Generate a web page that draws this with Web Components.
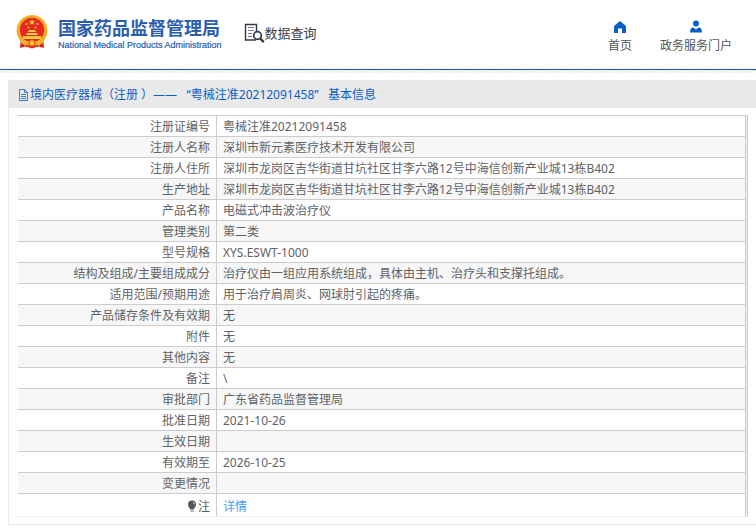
<!DOCTYPE html>
<html lang="zh-CN">
<head>
<meta charset="utf-8">
<title>国家药品监督管理局 数据查询</title>
<style>
body { margin: 0; background: #fff; color: #606266; font: 12px/20px "Noto Sans", "Noto Sans CJK SC", sans-serif; }
</style>
</head>
<body>
<site-header>
  <nav-link slot="nav" icon="home">首页</nav-link>
  <nav-link slot="nav" icon="user">政务服务门户</nav-link>
</site-header>
<info-panel>
  <span slot="title">境内医疗器械（注册 ）—— &nbsp;&nbsp;“粤械注准20212091458” &nbsp;&nbsp;基本信息</span>
  <record-table></record-table>
</info-panel>

<template id="site-header">
<style>
:host { display: block; }
header { display: flex; align-items: flex-start; height: 70px; box-sizing: border-box; padding: 14px 24px 0 15px; border-bottom: 1px solid #0f5aad; }
.emblem { width: 34px; height: 36px; flex: none; }
.brand { display: flex; flex-direction: column; margin: 4px 0 0 9px; color: #2a5db0; white-space: nowrap; }
.brand b { font: bold 18px/18px "Noto Sans CJK SC", sans-serif; }
.brand small { font: 9px/18px "Liberation Sans", sans-serif; -webkit-text-stroke: 0.2px; }
.query { display: flex; align-items: center; margin: 9px 0 0 22px; color: #3c3f48; font: 13px/20px "Noto Sans CJK SC", sans-serif; white-space: nowrap; }
.query svg { width: 21px; height: 20px; }
nav { display: flex; gap: 28px; margin: 6px 0 0 auto; }
.hatch { height: 3px; background: linear-gradient(135deg, #fff 40%, #dcdcdc 40% 60%, #fff 60%) 0 0 / 3px 3px; }
</style>
<header>
  <svg class="emblem" viewBox="0 0 34 36" aria-hidden="true">
    <path d="M6 25l-1 9q6-2 12 .5Q23 32 29 34l-1-9z" fill="#dc211c"/>
    <circle cx="17" cy="16.500" r="15.500" fill="#f4b629"/>
    <circle cx="17" cy="16.500" r="14" fill="none" stroke="#e89f22" stroke-dasharray="2 1.500"/>
    <circle cx="17" cy="16" r="12.200" fill="#e72a20"/>
    <path d="M17 5l.8 2.200h2.400l-1.900 1.400.7 2.300-2-1.400-2 1.400.7-2.300-1.900-1.400h2.400z" fill="#ffd84a"/>
    <g fill="#f9cc3e"><circle cx="11.500" cy="10" r="1"/><circle cx="22.500" cy="10" r="1"/><circle cx="13.500" cy="13.500" r="1"/><circle cx="20.500" cy="13.500" r="1"/>
    <path d="M13 18l1-2h6l1 2zM11 21l1-2h10l1 2zM8 22h18v3H8z"/></g>
    <path d="M5 26q6 3 12 0 6 3 12 0l-2 4q-5 2-10-1-5 3-10 1z" fill="#f2b32a"/>
    <circle cx="17" cy="29" r="3.200" fill="#f6bd32" stroke="#d93a1b"/>
    <path d="M10 28v5M24 28v5" stroke="#f7b93a" stroke-width="1"/>
  </svg>
  <div class="brand"><b>国家药品监督管理局</b><small>National Medical Products Administration</small></div>
  <div class="query">
    <svg viewBox="0 0 21 20" fill="none" stroke="#34384a" aria-hidden="true">
      <path d="M12 17H1.500V1.500h11V8" stroke-width="1.400"/>
      <path d="M4 4.500h6M4 7.500h6M4 10.500h4M4 13.500h4" stroke="#777b86"/>
      <circle cx="13.500" cy="12.500" r="3.800" stroke-width="1.700" fill="#fff"/>
      <path d="M16.200 15.500l3.600 3.700" stroke-width="2.400"/>
    </svg><span>数据查询</span>
  </div>
  <nav><slot name="nav"></slot></nav>
</header>
<div class="hatch"></div>
</template>

<template id="nav-link">
<style>
:host { display: block; }
a { display: flex; flex-direction: column; align-items: center; color: #555; text-decoration: none; white-space: nowrap; }
svg { width: 14px; height: 14px; fill: #0a5fc4; display: none; }
:host([icon="home"]) .home, :host([icon="user"]) .user { display: block; }
span { line-height: 24px; }
</style>
<a href="#">
  <svg class="home" viewBox="0 0 14 14" aria-hidden="true"><path d="M7 1L1 6v7h4V8.500h4V13h4V6z"/></svg>
  <svg class="user" viewBox="0 0 14 14" aria-hidden="true"><circle cx="7" cy="3.500" r="3"/><path d="M1 12.500q0-5 3.500-5L7 9.500l2.500-2q3.500 0 3.500 5z"/></svg>
  <span><slot></slot></span>
</a>
</template>

<template id="info-panel">
<style>
:host { display: block; margin: 7px 0 0 8px; border: 1px solid #e9e9e9; border-width: 0 0 1px 1px; }
h1 { display: flex; align-items: center; gap: 1px; margin: 0 0 0 -1px; padding: 5px 10px 3px; background: #e9e9e9; color: #0a5fc4; font: inherit; white-space: nowrap; }
svg { width: 11px; height: 12px; flex: none; }
.body { padding: 7px 8px 7px 9px; }
</style>
<h1>
  <svg viewBox="0 0 11 12" fill="none" stroke="#0a5fc4" aria-hidden="true"><path d="M1.500 .5h5l3 3v8h-8zM6.500 .5v3h3M3 5.500h5M3 7.500h5M3 9.500h5" stroke-width=".8"/></svg>
  <slot name="title"></slot>
</h1>
<div class="body"><slot></slot></div>
</template>

<template id="record-table">
<style>
:host { display: block; padding-right: 1px; border-right: 1px solid #ccc; background: #ebeef5; }
table { width: 100%; border-collapse: separate; border-spacing: 0; table-layout: fixed; background: #fff; border-right: 1px solid #ccc; border-bottom: 1px solid #ebeef5; }
.label { width: 199px; }
th, td { height: 21px; box-sizing: border-box; padding: 2px 6px 0; border-top: 1px solid #ccc; font-weight: normal; line-height: 18px; }
th { text-align: right; border-right: 1px solid #ccc; padding-left: 0; }
td { text-align: left; }
tr:nth-child(even) { background: #f7f7f7; }
tr:last-child > * { height: 23px; padding-top: 4px; }
a { color: #409eff; text-decoration: none; }
svg { width: 10px; height: 12px; vertical-align: -1px; margin-right: 1px; }
</style>
<table><colgroup><col class="label"><col></colgroup><tbody></tbody></table>
</template>

<template id="note-row">
<tr><th scope="row"><svg viewBox="0 0 10 12" aria-hidden="true"><path d="M5 .5a4 4 0 0 1 4 4c0 2.500-2 3.500-2.300 5H3.300C3 8 1 7 1 4.500a4 4 0 0 1 4-4z" fill="#55585c"/><path d="M3.500 11h3" stroke="#55585c"/><path d="M6 2.200q1.300.6 1.500 2" stroke="#ddd" fill="none"/></svg>注</th><td><a href="#">详情</a></td></tr>
</template>

<script>
class TemplateElement extends HTMLElement {
  constructor() {
    super();
    this.attachShadow({ mode: "open" })
      .append(document.getElementById(this.localName).content.cloneNode(true));
  }
}
const records = [
  ["注册证编号", "粤械注准20212091458"],
  ["注册人名称", "深圳市新元素医疗技术开发有限公司"],
  ["注册人住所", "深圳市龙岗区吉华街道甘坑社区甘李六路12号中海信创新产业城13栋B402"],
  ["生产地址", "深圳市龙岗区吉华街道甘坑社区甘李六路12号中海信创新产业城13栋B402"],
  ["产品名称", "电磁式冲击波治疗仪"],
  ["管理类别", "第二类"],
  ["型号规格", "XYS.ESWT-1000"],
  ["结构及组成/主要组成成分", "治疗仪由一组应用系统组成，具体由主机、治疗头和支撑托组成。"],
  ["适用范围/预期用途", "用于治疗肩周炎、网球肘引起的疼痛。"],
  ["产品储存条件及有效期", "无"],
  ["附件", "无"],
  ["其他内容", "无"],
  ["备注", "\\"],
  ["审批部门", "广东省药品监督管理局"],
  ["批准日期", "2021-10-26"],
  ["生效日期", ""],
  ["有效期至", "2026-10-25"],
  ["变更情况", ""]
];
customElements.define("site-header", class extends TemplateElement {});
customElements.define("nav-link", class extends TemplateElement {});
customElements.define("info-panel", class extends TemplateElement {});
customElements.define("record-table", class extends TemplateElement {
  constructor() {
    super();
    const body = this.shadowRoot.querySelector("tbody");
    for (const [label, value] of records) {
      const row = body.insertRow();
      const head = document.createElement("th");
      head.scope = "row";
      head.textContent = label;
      row.append(head);
      row.insertCell().textContent = value;
    }
    body.append(document.getElementById("note-row").content.cloneNode(true));
  }
});
</script>
</body>
</html>
